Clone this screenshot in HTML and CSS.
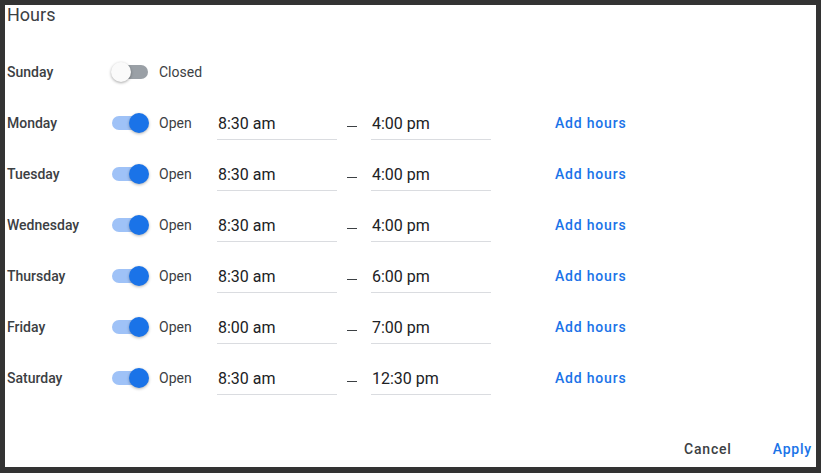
FILE: index.html
```html
<!DOCTYPE html>
<html>
<head>
<meta charset="utf-8">
<link rel="stylesheet" href="styles.css">
</head>
<body>
<div class="panel">
  <div class="title">Hours</div>
  <div class="rows">
    <div class="row">
      <div class="day">Sunday</div>
      <div class="switch off"><span class="track"></span><span class="knob"></span></div>
      <div class="status">Closed</div>
    </div>
    <div class="row">
      <div class="day">Monday</div>
      <div class="switch on"><span class="track"></span><span class="knob"></span></div>
      <div class="status">Open</div>
      <div class="field">8:30 am</div>
      <div class="dash"></div>
      <div class="field">4:00 pm</div>
      <div class="add">Add hours</div>
    </div>
    <div class="row">
      <div class="day">Tuesday</div>
      <div class="switch on"><span class="track"></span><span class="knob"></span></div>
      <div class="status">Open</div>
      <div class="field">8:30 am</div>
      <div class="dash"></div>
      <div class="field">4:00 pm</div>
      <div class="add">Add hours</div>
    </div>
    <div class="row">
      <div class="day">Wednesday</div>
      <div class="switch on"><span class="track"></span><span class="knob"></span></div>
      <div class="status">Open</div>
      <div class="field">8:30 am</div>
      <div class="dash"></div>
      <div class="field">4:00 pm</div>
      <div class="add">Add hours</div>
    </div>
    <div class="row">
      <div class="day">Thursday</div>
      <div class="switch on"><span class="track"></span><span class="knob"></span></div>
      <div class="status">Open</div>
      <div class="field">8:30 am</div>
      <div class="dash"></div>
      <div class="field">6:00 pm</div>
      <div class="add">Add hours</div>
    </div>
    <div class="row">
      <div class="day">Friday</div>
      <div class="switch on"><span class="track"></span><span class="knob"></span></div>
      <div class="status">Open</div>
      <div class="field">8:00 am</div>
      <div class="dash"></div>
      <div class="field">7:00 pm</div>
      <div class="add">Add hours</div>
    </div>
    <div class="row">
      <div class="day">Saturday</div>
      <div class="switch on"><span class="track"></span><span class="knob"></span></div>
      <div class="status">Open</div>
      <div class="field">8:30 am</div>
      <div class="dash"></div>
      <div class="field">12:30 pm</div>
      <div class="add">Add hours</div>
    </div>
  </div>
  <div class="footer">
    <div class="btn cancel">Cancel</div>
    <div class="btn apply">Apply</div>
  </div>
</div>
</body>
</html>
```
FILE: styles.css
```css
* { box-sizing: border-box; }
html, body { margin: 0; height: 100%; }
body {
  background: #333333;
  padding: 5px 5px 6px 5px;
  font-family: Roboto, "Liberation Sans", Arial, sans-serif;
  color: #3c4043;
}
.panel {
  background: #fff;
  height: 462px;
  display: flex;
  flex-direction: column;
  padding-left: 2px;
}
.title {
  font-size: 18px;
  line-height: 17px;
  padding-top: 1px;
  color: #3c4043;
  font-weight: 400;
}
.rows {
  margin-top: 23px;
  display: flex;
  flex-direction: column;
}
.row {
  height: 51px;
  display: flex;
  align-items: center;
}
.day {
  width: 104px;
  font-size: 14px;
  font-weight: 500;
  color: #3c4043;
}
.switch {
  width: 38px;
  height: 20px;
  display: flex;
  align-items: center;
  position: relative;
}
.track {
  display: block;
  margin-left: 1px;
  width: 36px;
  height: 14px;
  border-radius: 7px;
  background: #9aa0a6;
}
.knob {
  position: absolute;
  top: 0;
  left: 0;
  width: 20px;
  height: 20px;
  border-radius: 50%;
  background: #fafafa;
  box-shadow: 0 1px 3px rgba(0,0,0,0.35);
}
.switch.on .track { background: #9fc2f7; }
.switch.on .knob { left: 18px; background: #1a73e8; box-shadow: 0 1px 3px rgba(0,0,0,0.3); }
.status {
  margin-left: 10px;
  width: 58px;
  font-size: 14px;
  color: #3c4043;
}
.field {
  width: 120px;
  height: 35px;
  border-bottom: 1px solid #dadce0;
  font-size: 16px;
  color: #202124;
  display: flex;
  align-items: center;
  padding-top: 3px;
  padding-left: 1px;
}
.dash {
  width: 10px;
  height: 1px;
  background: #3c4043;
  margin: 8px 14px 0 10px;
}
.add {
  margin-left: 64px;
  font-size: 14px;
  font-weight: 500;
  letter-spacing: 0.8px;
  color: #1a73e8;
}
.footer {
  margin-top: auto;
  height: 36px;
  display: flex;
  justify-content: flex-end;
  align-items: center;
  gap: 41px;
  padding-right: 4px;
}
.btn {
  font-size: 14px;
  font-weight: 500;
  letter-spacing: 0.8px;
}
.cancel { color: #3c4043; }
.apply { color: #1a73e8; }
```
